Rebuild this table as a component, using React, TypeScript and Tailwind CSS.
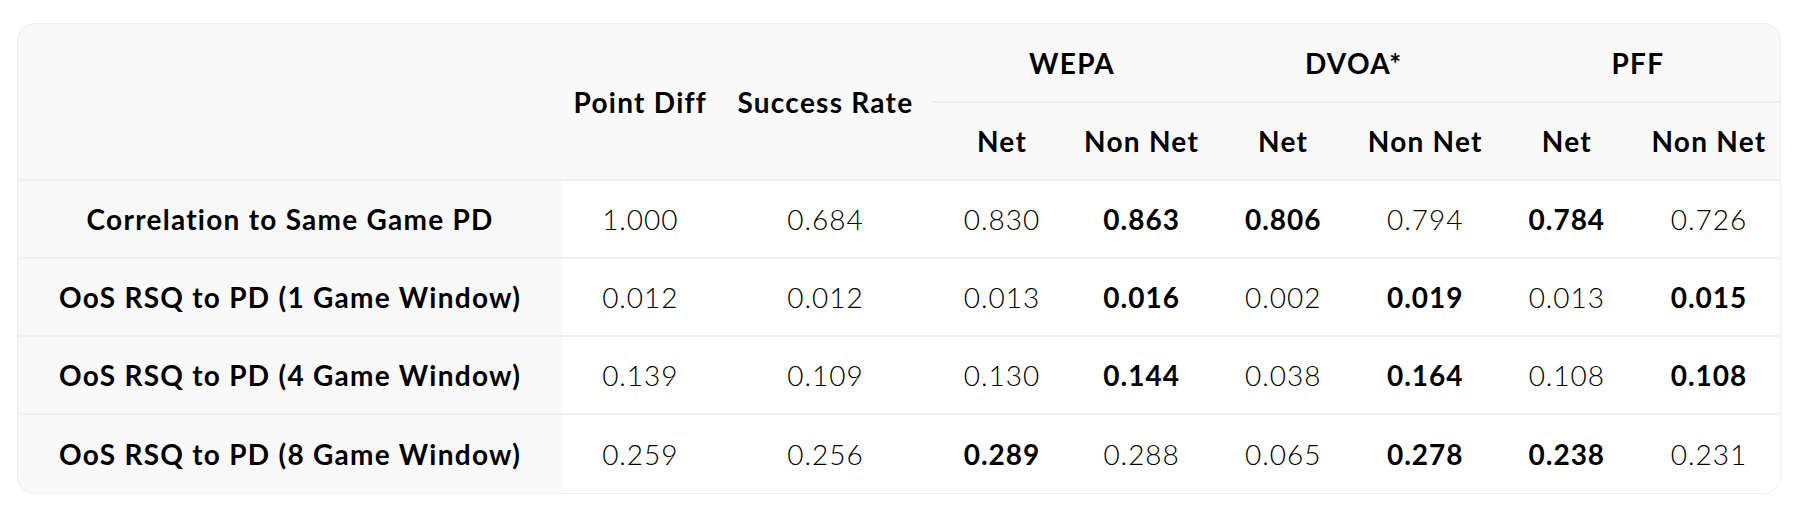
import * as React from 'react'

type Cell = { v: string; b?: boolean }

const rows: { label: string; cells: Cell[] }[] = [
  {
    label: 'Correlation to Same Game PD',
    cells: [
      { v: '1.000' }, { v: '0.684' }, { v: '0.830' }, { v: '0.863', b: true },
      { v: '0.806', b: true }, { v: '0.794' }, { v: '0.784', b: true }, { v: '0.726' },
    ],
  },
  {
    label: 'OoS RSQ to PD (1 Game Window)',
    cells: [
      { v: '0.012' }, { v: '0.012' }, { v: '0.013' }, { v: '0.016', b: true },
      { v: '0.002' }, { v: '0.019', b: true }, { v: '0.013' }, { v: '0.015', b: true },
    ],
  },
  {
    label: 'OoS RSQ to PD (4 Game Window)',
    cells: [
      { v: '0.139' }, { v: '0.109' }, { v: '0.130' }, { v: '0.144', b: true },
      { v: '0.038' }, { v: '0.164', b: true }, { v: '0.108' }, { v: '0.108', b: true },
    ],
  },
  {
    label: 'OoS RSQ to PD (8 Game Window)',
    cells: [
      { v: '0.259' }, { v: '0.256' }, { v: '0.289', b: true }, { v: '0.288' },
      { v: '0.065' }, { v: '0.278', b: true }, { v: '0.238', b: true }, { v: '0.231' },
    ],
  },
]

const groups = ['WEPA', 'DVOA*', 'PFF']

// header / label cells share one look
const head = 'text-center font-bold tracking-[0.045em]'

export default function App() {
  return (
    <div
      className="min-h-screen bg-white pl-[17px] pr-[21px] pt-[23px] text-black"
      style={{ fontFamily: 'Lato, "Open Sans", sans-serif' }}
    >
      <div className="overflow-hidden rounded-[18px] border border-[#eeeeee] bg-[#f9f9f9]">
        <table className="w-full table-fixed border-separate border-spacing-0 text-[28px]">
          <colgroup>
            <col className="w-[544px]" />
            <col className="w-[156px]" />
            <col className="w-[214px]" />
            <col className="w-[139px]" />
            <col className="w-[140px]" />
            <col className="w-[143px]" />
            <col className="w-[141px]" />
            <col className="w-[142px]" />
            <col className="w-[142px]" />
          </colgroup>
          <thead>
            <tr className="h-[79px]">
              <th rowSpan={2} className="border-b-2 border-[#efefef]" />
              <th rowSpan={2} className={'border-b-2 border-[#efefef] ' + head}>
                Point Diff
              </th>
              <th rowSpan={2} className={'border-b-2 border-[#efefef] ' + head}>
                Success Rate
              </th>
              {groups.map((g) => (
                <th key={g} colSpan={2} className={'border-b-2 border-[#efefef] ' + head}>
                  {g}
                </th>
              ))}
            </tr>
            <tr className="h-[78px]">
              {groups.map((g) => (
                <React.Fragment key={g}>
                  <th className={'border-b-2 border-[#efefef] ' + head}>Net</th>
                  <th className={'border-b-2 border-[#efefef] ' + head}>Non Net</th>
                </React.Fragment>
              ))}
            </tr>
          </thead>
          <tbody>
            {rows.map((row, i) => {
              const last = i === rows.length - 1
              return (
                <tr key={row.label} className="h-[78px]">
                  <td className={last ? head : 'border-b-2 border-[#efefef] ' + head}>
                    {row.label}
                  </td>
                  {row.cells.map((c, j) => (
                    <td
                      key={j}
                      className={
                        (last ? 'bg-white text-center ' : 'border-b-2 border-[#f1f1f1] bg-white text-center ') +
                        (c.b ? 'font-bold tracking-[0.035em]' : 'font-light tracking-[0.035em]')
                      }
                    >
                      {c.v}
                    </td>
                  ))}
                </tr>
              )
            })}
          </tbody>
        </table>
      </div>
    </div>
  )
}
